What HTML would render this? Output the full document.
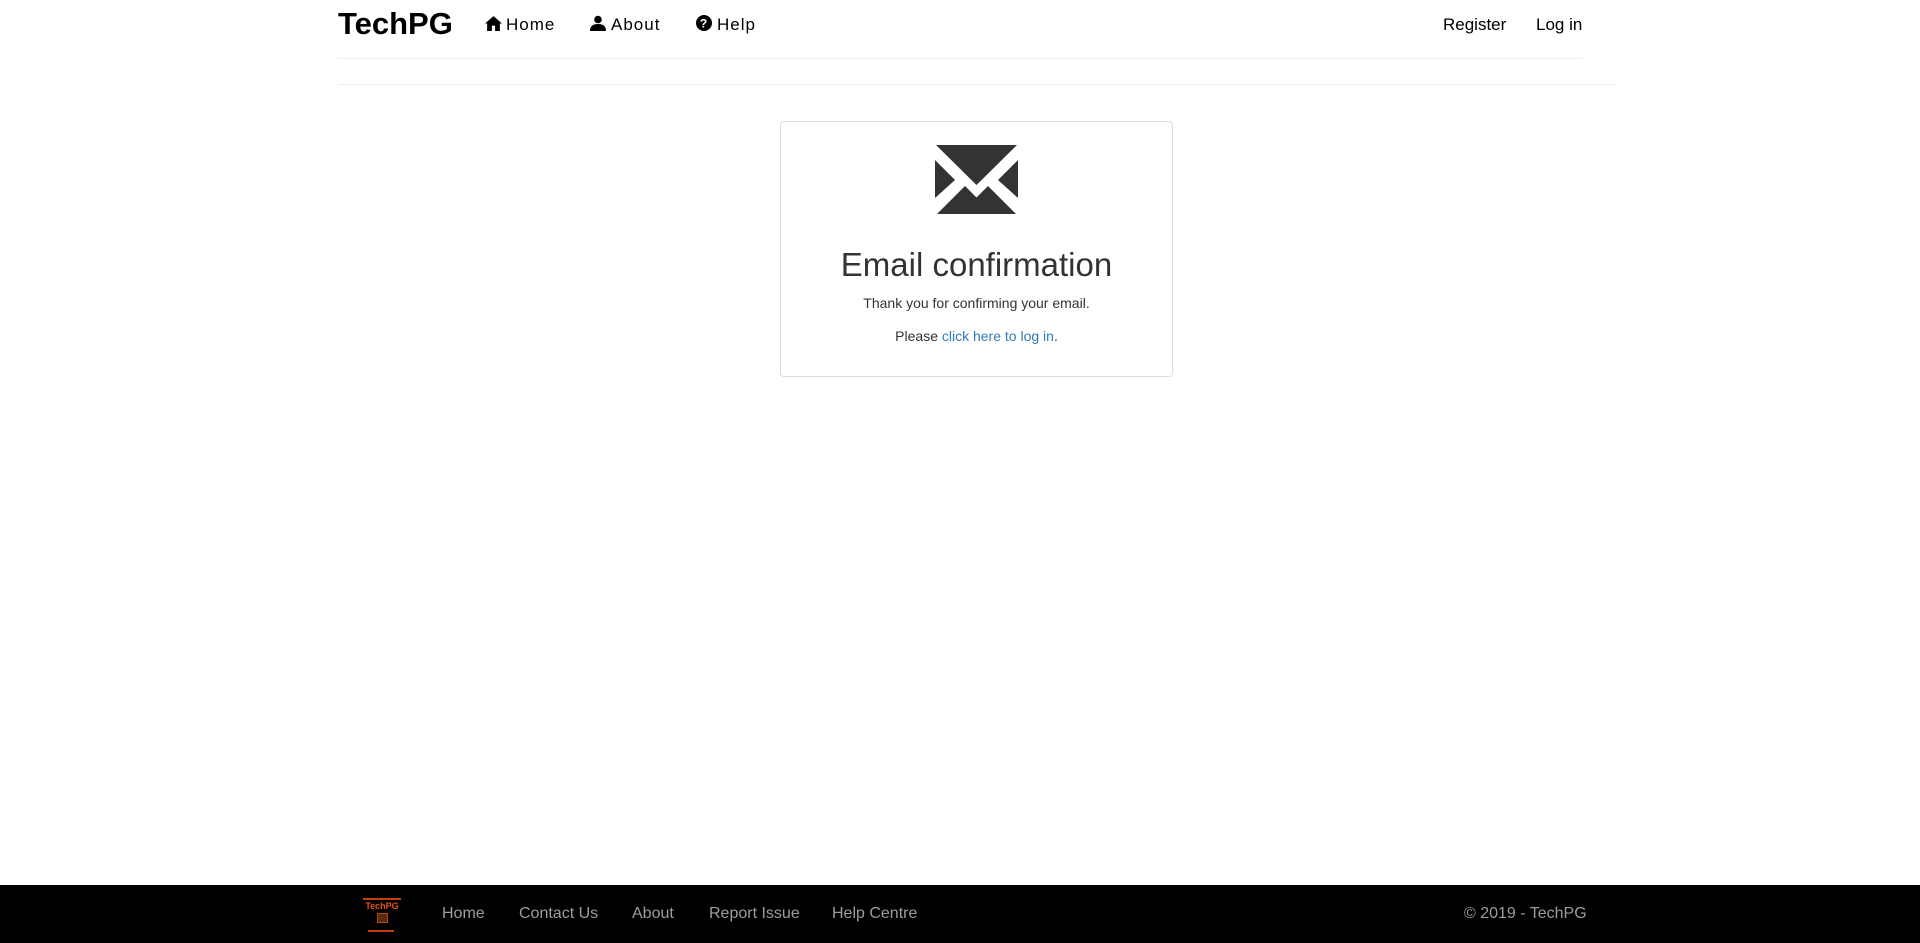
<!DOCTYPE html>
<html><head><meta charset="utf-8"><style>
body{margin:0;width:1920px;height:943px;background:#fff;font-family:"Liberation Sans",Arial,sans-serif;position:relative;overflow:hidden;color:#333}
.a{position:absolute;white-space:nowrap}
.nav{font-size:17px;color:#000;letter-spacing:1px;top:15px}
.ft{font-size:16px;color:#9d9d9d;top:905px}
</style></head><body>
<div class="a" style="left:338px;top:6px;font-size:31px;font-weight:bold;color:#000">TechPG</div>
<div class="a nav" style="left:485px"><svg width="17" height="16" viewBox="0 0 16 15" style="vertical-align:-1px;margin-right:4px"><path d="M8 1L0 8h2v7h4.5v-5h3v5H14V8h2z" fill="#000"/></svg>Home</div>
<div class="a nav" style="left:590px"><svg width="16" height="16" viewBox="0 0 16 16" style="vertical-align:-1px;margin-right:5px"><circle cx="8" cy="4.5" r="3.8" fill="#000"/><path d="M0 16c0-5 3-7 8-7s8 2 8 7z" fill="#000"/></svg>About</div>
<div class="a nav" style="left:696px"><svg width="16" height="16" viewBox="0 0 16 16" style="vertical-align:-1px;margin-right:5px"><circle cx="8" cy="8" r="8" fill="#000"/><text x="8" y="12.5" font-size="12" font-weight="bold" text-anchor="middle" fill="#fff" font-family="Liberation Sans">?</text></svg>Help</div>
<div class="a" style="left:1443px;top:15px;font-size:17px;color:#000">Register</div>
<div class="a" style="left:1536px;top:15px;font-size:17px;color:#000">Log in</div>
<div class="a" style="left:338px;top:58px;width:1244px;border-top:1px solid #eee"></div>
<div class="a" style="left:338px;top:84px;width:1277px;border-top:1px solid #eee"></div>
<div class="a" style="left:780px;top:121px;width:391px;height:254px;border:1px solid #ddd;border-radius:4px"></div>
<svg class="a" style="left:935px;top:145px" width="83" height="70" viewBox="0 0 83 70"><path d="M1 0h81L41.5 40z" fill="#333"/><path d="M0 15l20 20L0 53zM83 15L63 35l20 18zM2 69l28-28 11.5 11.5L53 41l28 28z" fill="#333"/></svg>
<div class="a" style="left:780px;width:393px;text-align:center;top:246px;font-size:33px">Email confirmation</div>
<div class="a" style="left:780px;width:393px;text-align:center;top:295px;font-size:14px">Thank you for confirming your email.</div>
<div class="a" style="left:780px;width:393px;text-align:center;top:328px;font-size:14px">Please <span style="color:#337ab7">click here to log in</span>.</div>
<div class="a" style="left:0;top:885px;width:1920px;height:58px;background:#000"></div>
<div class="a" style="left:363px;top:898px;width:38px;border-top:2px solid #c2410c"></div>
<div class="a" style="left:363px;top:901px;width:38px;text-align:center;font-size:9px;font-weight:bold;color:#e0551a">TechPG</div>
<div class="a" style="left:377px;top:913px;width:9px;height:8px;border:1px solid #c2410c;background:#5a2a10"></div>
<div class="a" style="left:368px;top:930px;width:26px;border-top:2px solid #c2410c"></div>
<div class="a ft" style="left:442px">Home</div>
<div class="a ft" style="left:519px">Contact Us</div>
<div class="a ft" style="left:632px">About</div>
<div class="a ft" style="left:709px">Report Issue</div>
<div class="a ft" style="left:832px">Help Centre</div>
<div class="a ft" style="left:1464px">© 2019 - TechPG</div>
</body></html>
